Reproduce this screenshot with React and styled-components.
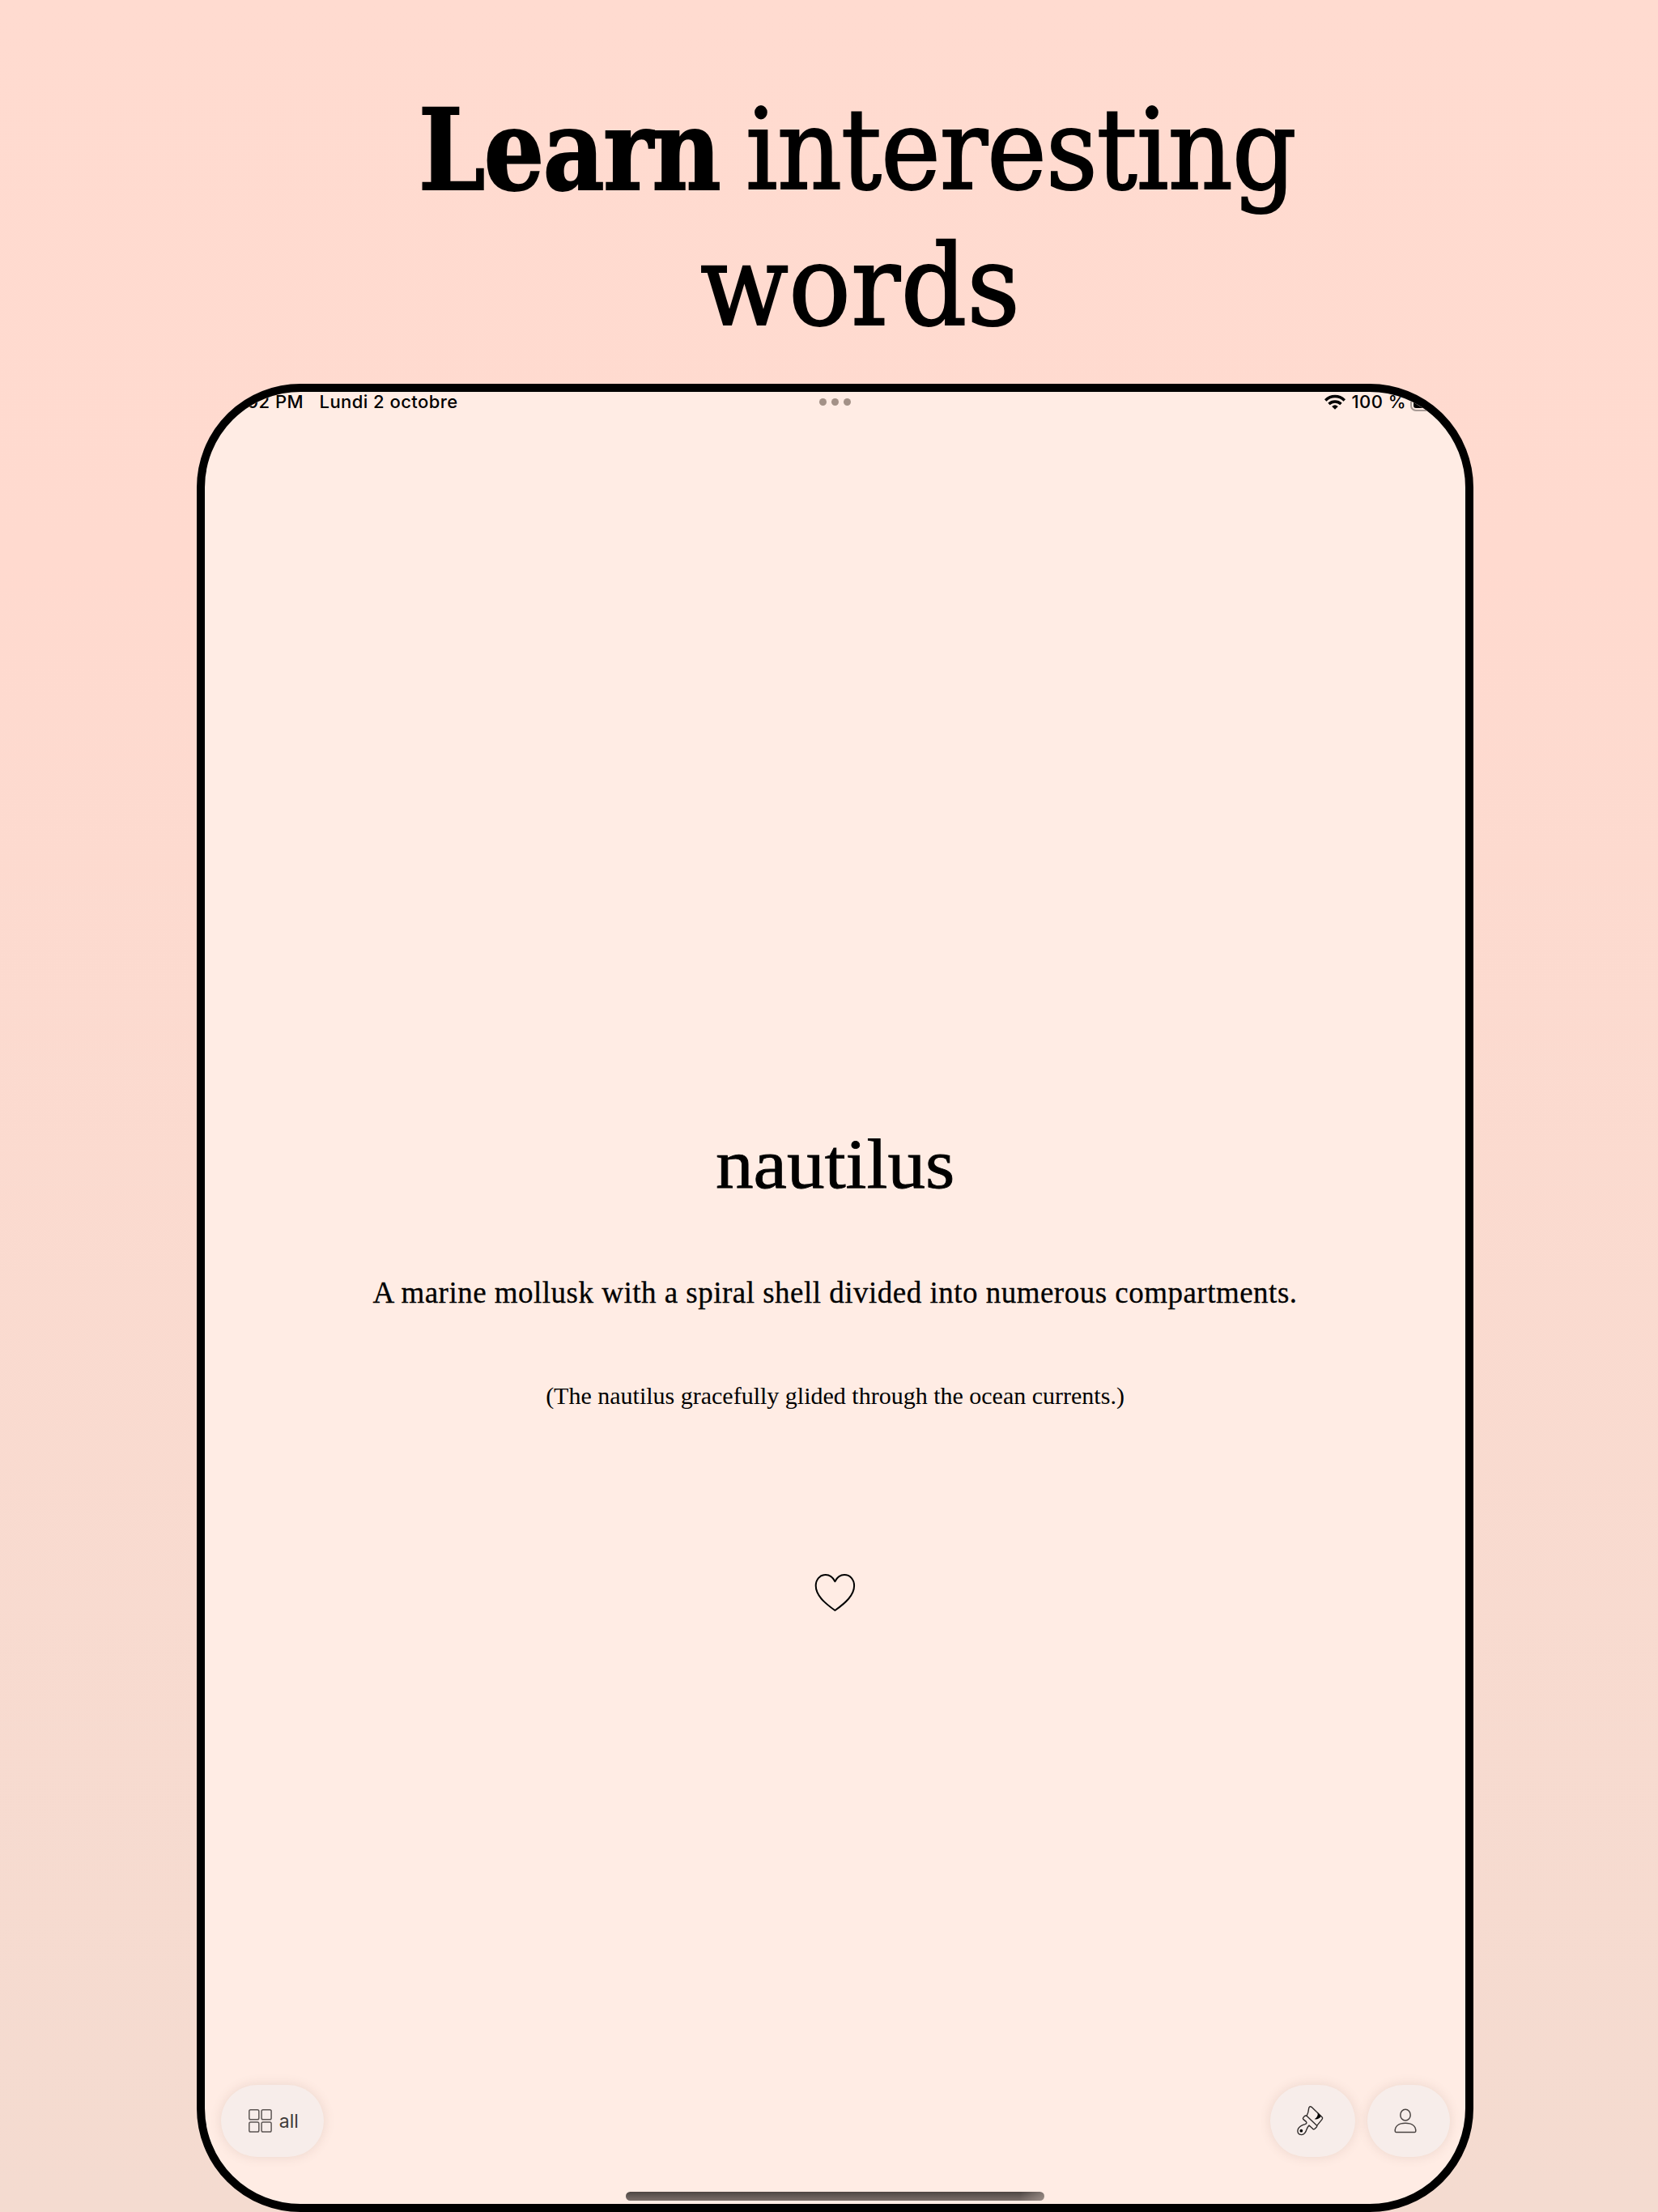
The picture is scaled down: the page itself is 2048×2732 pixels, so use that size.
import React from "react";
import styled, { createGlobalStyle } from "styled-components";

const GlobalStyle = createGlobalStyle`
  body {
    margin: 0;
    background: #ffdacf;
  }
  * {
    box-sizing: border-box;
  }
`;

const Page = styled.main`
  width: 2048px;
  height: 2732px;
  overflow: hidden;
  display: flex;
  flex-direction: column;
  background: linear-gradient(180deg, #ffdbd0 0%, #ffdacf 25%, #f4dbd0 100%);
`;

const Heading = styled.h1`
  margin: 0;
  padding-top: 102px;
  font: 400 138px/168px "DejaVu Serif Condensed", "DejaVu Serif", serif;
  color: #000;
  -webkit-text-stroke: 2px #000;
`;

const HeadingLine = styled.span`
  display: flex;
  height: 168px;
  padding-left: ${(p) => p.$start}px;
  white-space: pre;
`;

const HeadingWord = styled.span`
  display: block;
  width: ${(p) => p.$width}px;
  font-weight: ${(p) => (p.$bold ? 700 : 400)};
  letter-spacing: ${(p) => p.$tracking}px;
  transform: scaleX(${(p) => p.$stretch || 1});
  transform-origin: left center;
`;

const Tablet = styled.section`
  width: 1577px;
  height: 2258px;
  margin: 36px 0 0 243px;
  border: 10px solid #000;
  border-radius: 128px;
  background: #ffece4;
  overflow: hidden;
  display: flex;
  flex-direction: column;
`;

const StatusBar = styled.header`
  height: 25px;
  display: grid;
  grid-template-columns: 1fr auto 1fr;
  align-items: center;
  font: 500 22px/25px Inter, "Liberation Sans", sans-serif;
  letter-spacing: 0.45px;
  color: #000;
  white-space: pre;
`;

const StatusStart = styled.div`
  display: flex;
  gap: 19.5px;
`;

const Time = styled.span`
  width: 122px;
  text-align: right;
`;

const Dots = styled.div`
  display: flex;
  gap: 5.6px;
`;

const Dot = styled.i`
  width: 9.6px;
  height: 9.6px;
  border-radius: 50%;
  background: #a39187;
`;

const StatusEnd = styled.div`
  display: flex;
  align-items: center;
  justify-content: flex-end;
  padding-right: 20px;
`;

const Percent = styled.span`
  margin: 0 5px 0 8px;
`;

const Battery = styled.span`
  width: 48px;
  height: 23px;
  padding: 2px;
  border: 2px solid #a79a94;
  border-radius: 7px;
`;

const BatteryLevel = styled.span`
  display: block;
  height: 100%;
  border-radius: 3px;
  background: #000;
`;

const Card = styled.article`
  flex: 1;
  padding-top: 879px;
  display: flex;
  flex-direction: column;
  align-items: center;
  font-family: "Liberation Serif", serif;
  color: #000;
  white-space: nowrap;
`;

const Word = styled.h2`
  margin: 0;
  font-size: 86px;
  font-weight: 400;
  line-height: 100px;
  transform: translateX(0.5px) scaleX(1.085);
  -webkit-text-stroke: 0.8px #000;
`;

const Definition = styled.p`
  margin: 87px 0 0;
  font-size: 37px;
  line-height: 44px;
  letter-spacing: 0.49px;
  -webkit-text-stroke: 0.3px #000;
`;

const Example = styled.p`
  margin: 87px 0 201px;
  font-size: 30px;
  line-height: 36px;
`;

const Toolbar = styled.footer`
  display: flex;
  align-items: center;
  gap: 15px;
  padding: 0 19.5px 0 20px;
`;

const Pill = styled.button`
  width: ${(p) => p.$width}px;
  height: 89.5px;
  margin: 0 ${(p) => (p.$pushNext ? "auto" : 0)} 0 0;
  padding: 0 ${(p) => p.$nudge || 0}px 0 ${(p) => p.$lead || 0}px;
  border: 0;
  border-radius: 45px;
  background: #f7edea;
  box-shadow: 0 0 14px rgba(130, 95, 80, 0.16);
  display: flex;
  align-items: center;
  justify-content: center;
  gap: 9px;
  font: 400 23px/28px Inter, "Liberation Sans", sans-serif;
  color: #403b39;
`;

const Glyph = styled.svg`
  display: block;
  flex: none;
  fill: none;
  stroke: ${(p) => p.$color || "#4a4442"};
  stroke-width: ${(p) => p.$weight};
  stroke-linejoin: round;
  stroke-linecap: ${(p) => p.$cap || "round"};
`;

const PillLabel = styled.span`
  padding-top: 2px;
`;

const HomeIndicator = styled.div`
  width: 517px;
  height: 11px;
  margin: 43px auto 4px;
  border-radius: 6px;
  background:
    linear-gradient(100deg, transparent 94%, rgba(190, 175, 168, 0.5)),
    linear-gradient(180deg, #4d4643, #7a6e69);
`;

const WifiIcon = () => (
  <Glyph width="26" height="20" viewBox="0 0 26 20" $weight="3.5" $color="#000" $cap="butt">
    <path d="M1.2 7.4C7.9 .9 18.1 .9 24.8 7.4" />
    <path d="M5.5 11.9C9.7 7.9 16.3 7.9 20.5 11.9" />
    <path d="M13 18.8L9.2 15Q13 11.7 16.8 15Z" fill="#000" stroke="none" />
  </Glyph>
);

const HeartIcon = () => (
  <Glyph width="51" height="48" viewBox="0 0 51 48" $weight="2" $color="#000">
    <path d="M25.4 10.3C22.8 5 18.5 2 13.8 2C6.8 2 1.7 7.6 1.7 15.6C1.7 27 12 36.5 25.4 46C38.8 36.5 49.1 27 49.1 15.6C49.1 7.6 44 2 37 2C32.3 2 28 5 25.4 10.3Z" />
  </Glyph>
);

const GridIcon = () => (
  <Glyph width="29" height="29" viewBox="0 0 29 29" $weight="1.5" $color="#5d5654">
    <rect x=".8" y=".8" width="12" height="12" rx="1.8" />
    <rect x="16.1" y=".8" width="12" height="12" rx="1.8" />
    <rect x=".8" y="16.1" width="12" height="12" rx="1.8" />
    <rect x="16.1" y="16.1" width="12" height="12" rx="1.8" />
  </Glyph>
);

const BrushIcon = () => (
  <Glyph width="50" height="50" viewBox="0 0 150 150" $weight="4.2" $color="#2f2b2a">
    <path d="M57 58C62 50 64 41 65 30Q67 20 75 25L114 62Q118 66 114 71L95 94" />
    <path d="M57 58Q53 55 49 59L44 65Q42 68 45 71L55 79Q60 85 51 89C40 92 30 97 25 107C20 118 27 128 38 128C48 127 54 118 57 108Q61 98 66 93L80 106Q84 109 88 105L94 99Q97 96 94 93Z" />
    <path d="M98 46Q100 62 86 70Q102 72 110 59Z" fill="#000" stroke="none" />
    <circle cx="37" cy="113" r="5.5" fill="#000" stroke="none" />
  </Glyph>
);

const PersonIcon = () => (
  <Glyph width="30" height="31" viewBox="0 0 30 31" $weight="1.5">
    <ellipse cx="15" cy="8.2" rx="6.2" ry="6.9" />
    <path d="M3.5 29.4Q2.2 29.4 2.2 28C2.2 22 7 18.3 15 18.3C23 18.3 27.8 22 27.8 28Q27.8 29.4 26.5 29.4Z" />
  </Glyph>
);

export default function App() {
  return (
    <>
      <GlobalStyle />
      <Page>
        <Heading>
          <HeadingLine $start={517}>
            <HeadingWord $bold $width={404} $tracking={-1.5} $stretch={0.942}>Learn </HeadingWord>
            <HeadingWord $width={690} $tracking={-0.8}>interesting</HeadingWord>
          </HeadingLine>
          <HeadingLine $start={865}>
            <HeadingWord $width={400} $tracking={0.5} $stretch={1.024}>words</HeadingWord>
          </HeadingLine>
        </Heading>

        <Tablet>
          <StatusBar>
            <StatusStart>
              <Time>5:02 PM</Time>
              <span>Lundi 2 octobre</span>
            </StatusStart>
            <Dots>
              <Dot />
              <Dot />
              <Dot />
            </Dots>
            <StatusEnd>
              <WifiIcon />
              <Percent>100 %</Percent>
              <Battery>
                <BatteryLevel />
              </Battery>
            </StatusEnd>
          </StatusBar>

          <Card>
            <Word>nautilus</Word>
            <Definition>A marine mollusk with a spiral shell divided into numerous compartments.</Definition>
            <Example>(The nautilus gracefully glided through the ocean currents.)</Example>
            <HeartIcon />
          </Card>

          <Toolbar>
            <Pill $width={126.5} $pushNext $lead={3}>
              <GridIcon />
              <PillLabel>all</PillLabel>
            </Pill>
            <Pill $width={105} $nudge={2.5} aria-label="Theme">
              <BrushIcon />
            </Pill>
            <Pill $width={101.5} $nudge={7} aria-label="Profile">
              <PersonIcon />
            </Pill>
          </Toolbar>
          <HomeIndicator />
        </Tablet>
      </Page>
    </>
  );
}
